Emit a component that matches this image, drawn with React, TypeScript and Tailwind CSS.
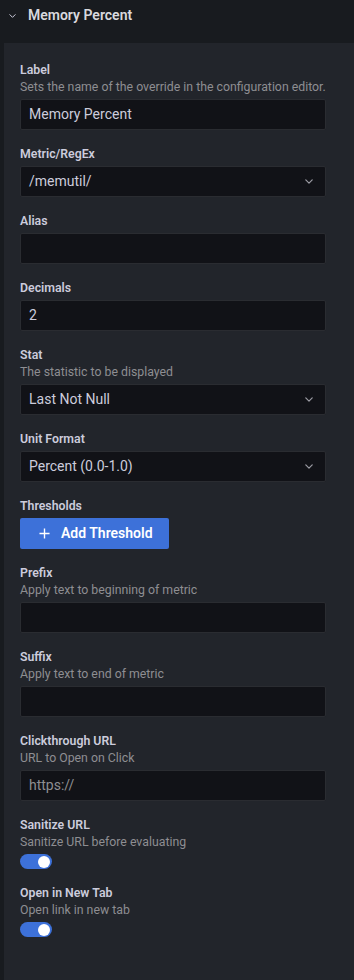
import React from "react";

function Chevron({ className }: { className?: string }) {
  return (
    <svg viewBox="0 0 10 6" className={className} fill="none">
      <path d="M1 1l4 4 4-4" stroke="currentColor" strokeWidth="1.5" strokeLinecap="round" strokeLinejoin="round" />
    </svg>
  );
}

function Field({
  label,
  desc,
  children,
}: {
  label: string;
  desc?: string;
  children: React.ReactNode;
}) {
  return (
    <div className="mb-[15px]">
      <div className={desc ? "" : "mb-[3px]"}>
        <div className="text-[12.3px] leading-[18px] font-semibold text-[#ccccdc]">{label}</div>
        {desc && <div className="text-[12.3px] leading-[16px] mb-[4px] text-[#8e8e92]">{desc}</div>}
      </div>
      {children}
    </div>
  );
}

function Input({ value, placeholder }: { value?: string; placeholder?: string }) {
  return (
    <div className="h-[31px] flex items-center px-[8px] bg-[#111217] border border-[#2a2c31] rounded-[2px] text-[14px]">
      {value ? (
        <span className="text-[#ccccdc]">{value}</span>
      ) : (
        <span className="text-[#8e8e92]">{placeholder}</span>
      )}
    </div>
  );
}

function Select({ value }: { value: string }) {
  return (
    <div className="h-[31px] flex items-center justify-between pl-[8px] pr-[12px] bg-[#111217] border border-[#2a2c31] rounded-[2px] text-[14px]">
      <span className="text-[#ccccdc]">{value}</span>
      <Chevron className="w-[8px] h-[5px] text-[#9c9ca4]" />
    </div>
  );
}

function Toggle() {
  return (
    <div className="w-[32px] h-[15px] rounded-full bg-[#3d71d9] flex items-center justify-end pr-[2px]">
      <div className="w-[12px] h-[12px] rounded-full bg-white" />
    </div>
  );
}

export default function App() {
  return (
    <div
      className="w-[354px] h-[980px] bg-[#181b1f] flex flex-col overflow-hidden"
      style={{ fontFamily: "Roboto, 'Liberation Sans', sans-serif" }}
    >
      {/* override header */}
      <div className="h-[43px] flex items-start pt-[5px] pl-[9px] shrink-0">
        <Chevron className="w-[7px] h-[4px] mt-[9px] text-[#ccccdc]" />
        <span className="ml-[12px] text-[14px] leading-[20px] font-semibold text-[#d8d9de]">Memory Percent</span>
      </div>

      <div className="flex-1 ml-[4px] bg-[#22252b] pt-[18px] pl-[16px] pr-[28px]">
        <Field label="Label" desc="Sets the name of the override in the configuration editor.">
          <Input value="Memory Percent" />
        </Field>
        <Field label="Metric/RegEx">
          <Select value="/memutil/" />
        </Field>
        <Field label="Alias">
          <Input />
        </Field>
        <Field label="Decimals">
          <Input value="2" />
        </Field>
        <Field label="Stat" desc="The statistic to be displayed">
          <Select value="Last Not Null" />
        </Field>
        <Field label="Unit Format">
          <Select value="Percent (0.0-1.0)" />
        </Field>
        <Field label="Thresholds">
          <button className="h-[31px] w-[149px] flex items-center pl-[19px] gap-[9px] bg-[#3d71d9] rounded-[2px] text-white text-[14px] font-semibold">
            <svg viewBox="0 0 12 12" className="w-[11px] h-[11px]">
              <path d="M6 0.5v11M0.5 6h11" stroke="white" strokeWidth="1.5" />
            </svg>
            <span className="ml-[2px]">Add Threshold</span>
          </button>
        </Field>
        <Field label="Prefix" desc="Apply text to beginning of metric">
          <Input />
        </Field>
        <Field label="Suffix" desc="Apply text to end of metric">
          <Input />
        </Field>
        <Field label="Clickthrough URL" desc="URL to Open on Click">
          <Input placeholder="https://" />
        </Field>
        <Field label="Sanitize URL" desc="Sanitize URL before evaluating">
          <Toggle />
        </Field>
        <Field label="Open in New Tab" desc="Open link in new tab">
          <Toggle />
        </Field>
      </div>
    </div>
  );
}
